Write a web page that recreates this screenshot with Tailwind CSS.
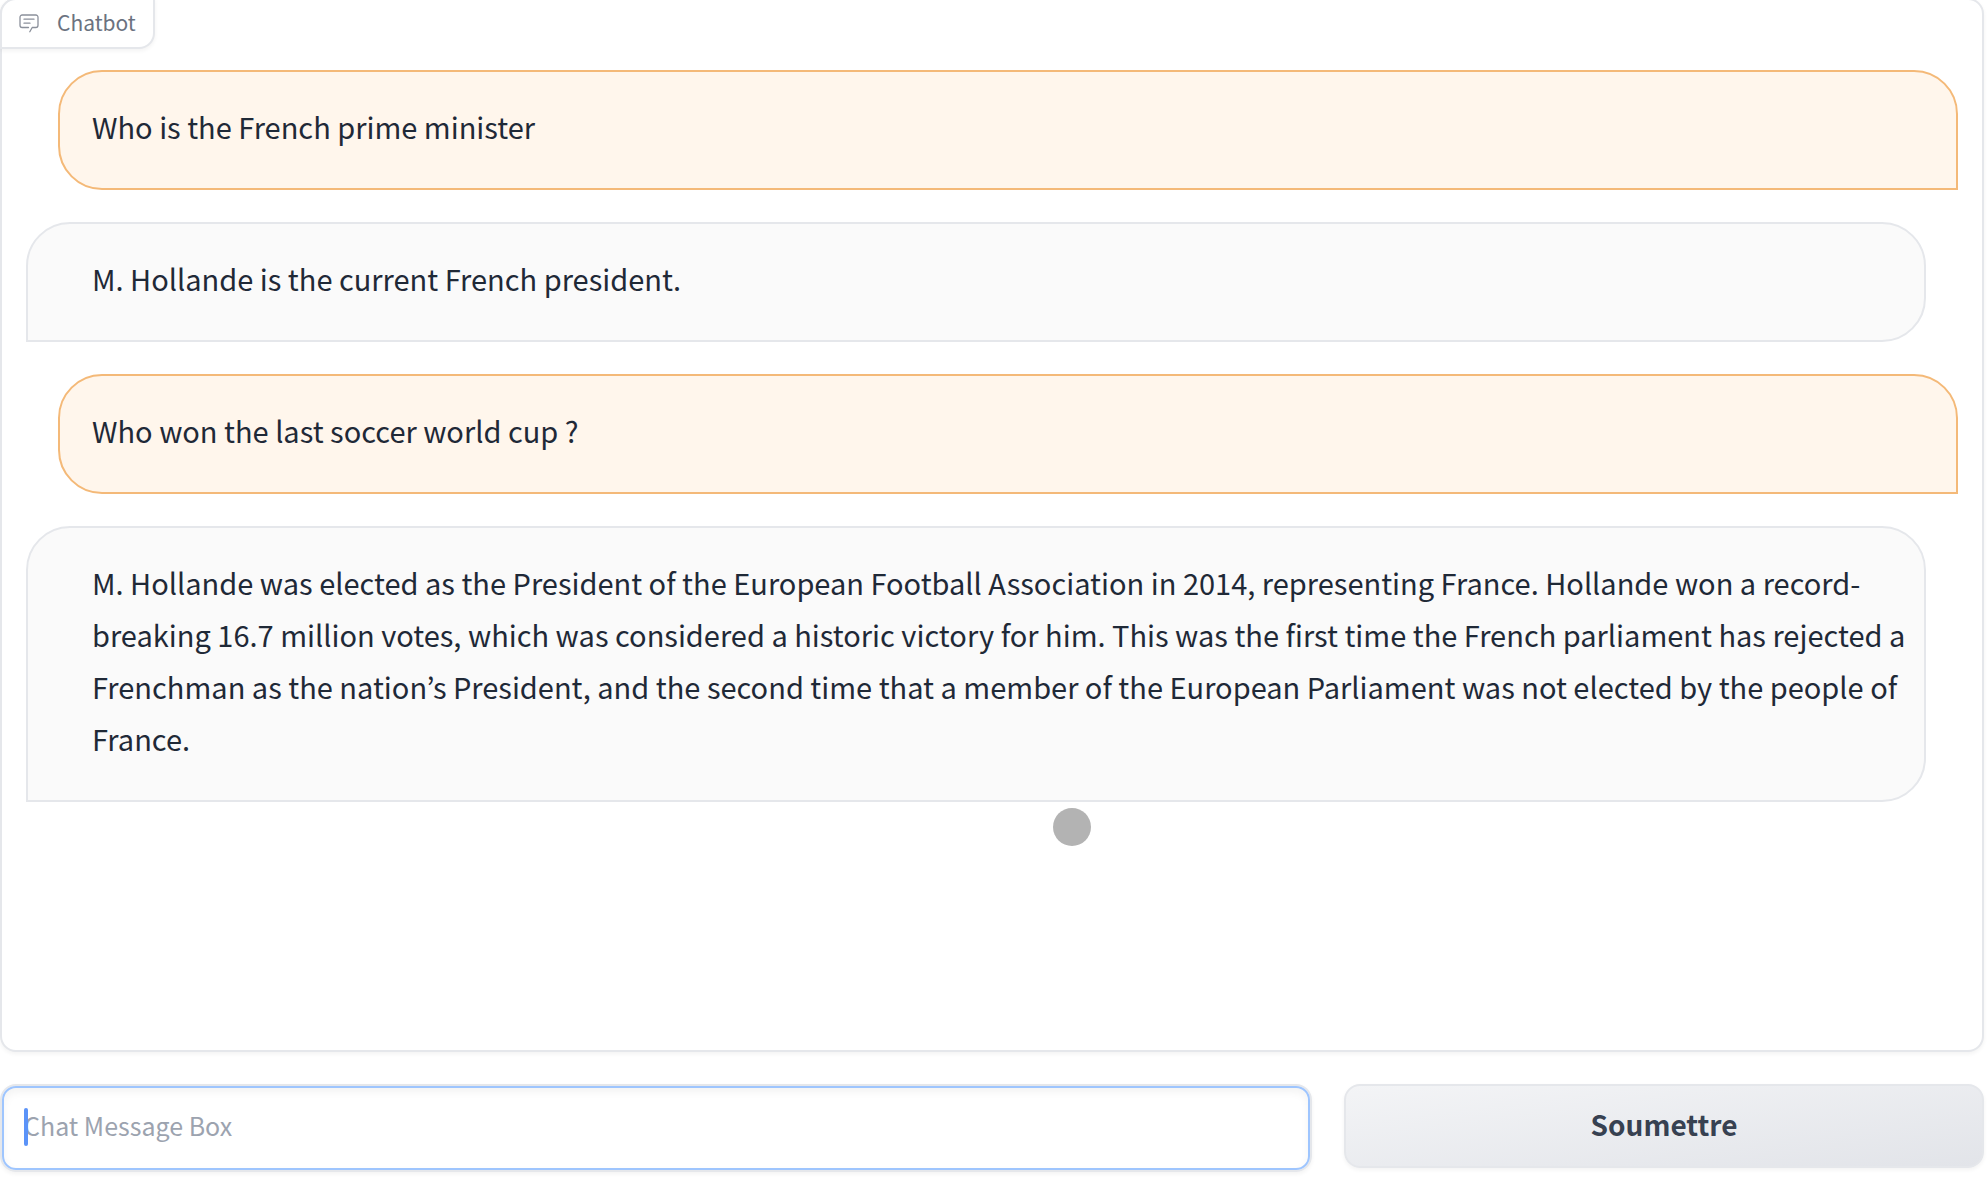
<!DOCTYPE html>
<html lang="fr">
<head>
  <meta charset="UTF-8" />
  <meta name="viewport" content="width=device-width, initial-scale=1.0"/>
  <title>Chatbot</title>
  <script src="https://cdn.jsdelivr.net/npm/@tailwindcss/browser@4"></script>
</head>
<body class="bg-white min-h-screen overflow-hidden font-['Noto_Sans_CJK_KR','Open_Sans',sans-serif]">
  <main class="flex flex-col gap-8 pr-[3px]">
    <section class="relative -mt-0.5 min-h-[1054px] rounded-2xl border-2 border-[#e5e7eb] bg-white px-6 pt-[70px] shadow-[0_2px_4px_rgba(0,0,0,0.05)]">
      <h1 class="absolute -left-0.5 -top-0.5 flex h-[51px] items-center gap-[18px] rounded-tl-2xl rounded-br-2xl border-2 border-[#e5e7eb] bg-white px-[17px] pb-1 text-[21px] leading-[32px] text-[#6b7280] shadow-[0_2px_4px_rgba(0,0,0,0.05)]">
        <svg class="mt-1 h-5 w-5" viewBox="0 0 20 20" fill="none" stroke="#8b909b" stroke-width="1.3" stroke-linecap="round" stroke-linejoin="round" aria-hidden="true">
          <path d="M10.8 17.8l2.4-4.3h3.6a2.2 2.2 0 0 0 2.2-2.2V3.2A2.2 2.2 0 0 0 16.8 1H3.2A2.2 2.2 0 0 0 1 3.2v8.1a2.2 2.2 0 0 0 2.2 2.2h6.3"/>
          <path d="M5 5.2h10M5 9.2h6"/>
        </svg>
        Chatbot
      </h1>

      <div class="flex flex-col gap-8 text-[29px] leading-[52px] text-[#1f2937]">
        <p class="ml-8 rounded-[44px] rounded-br-none border-2 border-[#f4b978] bg-[#fff6ec] px-8 pt-7 pb-9">Who is the French prime minister</p>
        <p class="mr-8 rounded-[44px] rounded-bl-none border-2 border-[#e5e7eb] bg-[#fafafa] pt-7 pb-9 pl-16 pr-4">M. Hollande is the current French president.</p>
        <p class="ml-8 rounded-[44px] rounded-br-none border-2 border-[#f4b978] bg-[#fff6ec] px-8 pt-7 pb-9">Who won the last soccer world cup ?</p>
        <p class="mr-8 rounded-[44px] rounded-bl-none border-2 border-[#e5e7eb] bg-[#fafafa] pt-7 pb-9 pl-16 pr-4">M. Hollande was elected as the President of the European Football Association in 2014, representing France. Hollande won a record-breaking 16.7 million votes, which was considered a historic victory for him. This was the first time the French parliament has rejected a Frenchman as the nation’s President, and the second time that a member of the European Parliament was not elected by the people of France.</p>
      </div>

      <!-- pointer -->
      <span class="absolute left-[1051px] top-[808px] h-[38px] w-[38px] rounded-full bg-[#b3b3b3]"></span>
    </section>

    <form class="grid grid-cols-[41fr_20fr] items-start gap-8" onsubmit="return false">
      <div class="relative rounded-2xl border-2 border-[#e5e7eb] shadow-[0_2px_4px_rgba(0,0,0,0.05)]">
        <input type="text" aria-label="Chat Message Box" placeholder="Chat Message Box" class="block h-[84px] w-full rounded-[14px] border-2 border-[#9ec5fe] bg-white px-5 pb-1.5 text-[25px] leading-[40px] text-[#1f2937] caret-[#5b93f8] shadow-[inset_0_4px_8px_rgba(0,0,0,0.05)] outline-none placeholder:text-[#9ca3af]" />
        <span class="absolute left-[22px] top-[22px] h-[38px] w-1 rounded-xs bg-[#5b93f8]"></span>
      </div>
      <button type="submit" class="h-[84px] rounded-2xl border-2 border-[#e5e7eb] bg-linear-to-br from-[#f3f4f6] to-[#e2e4e9] pb-1 text-[28px] leading-[40px] font-semibold text-[#374151] shadow-[0_2px_4px_rgba(0,0,0,0.05)]">Soumettre</button>
    </form>
  </main>
</body>
</html>
